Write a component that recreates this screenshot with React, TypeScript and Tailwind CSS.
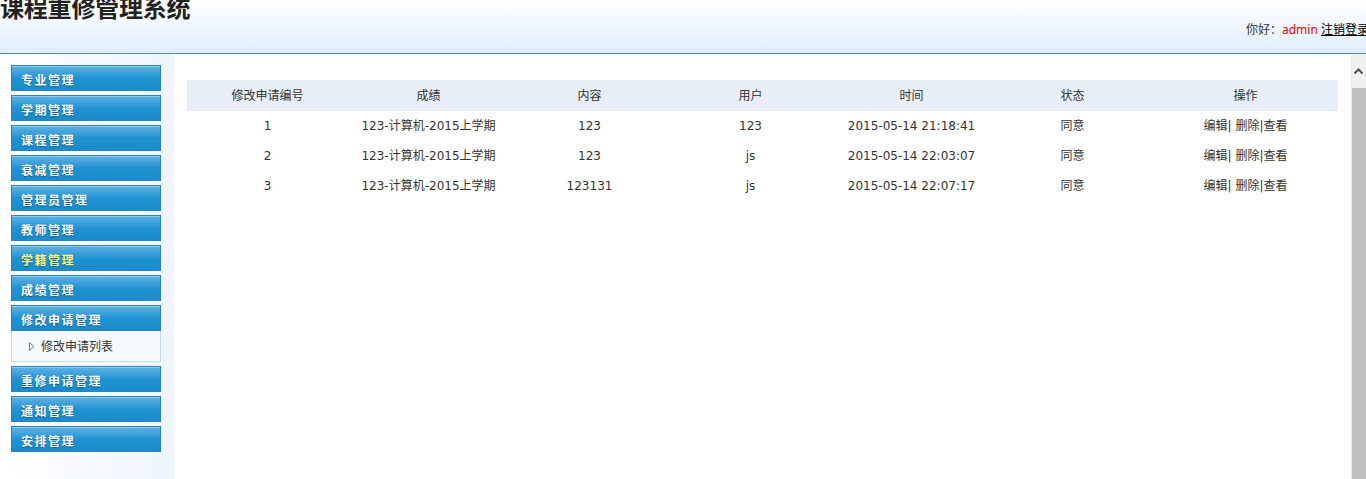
const menus = [
  "专业管理",
  "学期管理",
  "课程管理",
  "衰减管理",
  "管理员管理",
  "教师管理",
  "学籍管理",
  "成绩管理",
  "修改申请管理",
  "重修申请管理",
  "通知管理",
  "安排管理",
];

const rows = [
  { id: "1", score: "123-计算机-2015上学期", content: "123", user: "123", time: "2015-05-14 21:18:41", status: "同意" },
  { id: "2", score: "123-计算机-2015上学期", content: "123", user: "js", time: "2015-05-14 22:03:07", status: "同意" },
  { id: "3", score: "123-计算机-2015上学期", content: "123131", user: "js", time: "2015-05-14 22:07:17", status: "同意" },
];

const cols = ["修改申请编号", "成绩", "内容", "用户", "时间", "状态", "操作"];
const colW = ["w-[161px]", "w-[161px]", "w-[161px]", "w-[161px]", "w-[161px]", "w-[161px]", "w-[185px]"];

function MenuButton({ label }: { label: string }) {
  return (
    <div className="h-[26px] w-[150px] border border-[#2a83c0] bg-gradient-to-b from-[#5db3e3] via-[#1f93d2] to-[#1a8bcb] shadow-[inset_0_1px_0_#8fcdf0] flex items-center pl-[9px]">
      <span
        className={
          "text-[12px] font-bold leading-none pt-[6px] tracking-[1.5px] [text-shadow:0_1px_1px_rgba(0,60,110,0.6)] " +
          (label === "学籍管理" ? "text-[#ffff7a]" : "text-white")
        }
      >
        {label}
      </span>
    </div>
  );
}

export default function App() {
  return (
    <div
      className="w-[1366px] h-[479px] overflow-hidden flex flex-col bg-white text-[#333]"
      style={{ fontFamily: '"Noto Sans", "Noto Sans CJK SC", sans-serif' }}
    >
      {/* header */}
      <div className="h-[54px] shrink-0 border-b border-[#4a8ccc] bg-gradient-to-b from-white to-[#dfeefc] flex justify-between">
        <h1 className="text-[24px] font-bold leading-none mt-[-4px] text-[#222] tracking-[-0.2px]">
          课程重修管理系统
        </h1>
        <div className="self-start mt-[24px] mr-[-3px] text-[12px] leading-none whitespace-nowrap">
          <span className="text-[#333]">你好：</span>
          <span className="text-[#ff0000]">admin</span>{" "}
          <a href="#" className="text-black underline">
            注销登录
          </a>
        </div>
      </div>

      <div className="flex flex-1 min-h-0">
        {/* sidebar */}
        <aside className="w-[174px] shrink-0 bg-gradient-to-r from-white to-[#eef5fd] pt-[11px] pl-[11px] flex flex-col gap-[4px]">
          {menus.map((m) => (
            <div key={m}>
              <MenuButton label={m} />
              {m === "修改申请管理" && (
                <div className="w-[150px] h-[31px] border border-t-0 border-[#c6dbe9] bg-[#f5fafe] flex items-center pl-[17px] gap-[6px]">
                  <svg width="6" height="9" viewBox="0 0 6 9">
                    <path d="M0.5 0.5 L5 4.5 L0.5 8.5 Z" fill="#eef6fc" stroke="#3a8fc8" strokeWidth="1" />
                  </svg>
                  <span className="text-[12px] text-[#333] pt-[2px]">修改申请列表</span>
                </div>
              )}
            </div>
          ))}
        </aside>

        {/* content */}
        <main className="flex-1 pt-[26px] px-[13px]">
          <table
            className="w-[1151px] border-collapse text-[12px] text-[#333]"
            style={{ fontFamily: '"DejaVu Sans", "Noto Sans CJK SC", sans-serif' }}
          >
            <thead>
              <tr className="h-[31px] bg-[#e8eef7]">
                {cols.map((c, i) => (
                  <th key={c} className={"font-normal text-center " + colW[i]}>
                    {c}
                  </th>
                ))}
              </tr>
            </thead>
            <tbody>
              {rows.map((r) => (
                <tr key={r.id} className="h-[30px]">
                  <td className="text-center">{r.id}</td>
                  <td className="text-center">{r.score}</td>
                  <td className="text-center">{r.content}</td>
                  <td className="text-center">{r.user}</td>
                  <td className="text-center">{r.time}</td>
                  <td className="text-center">{r.status}</td>
                  <td className="text-center">
                    <a href="#" className="text-[#333]">编辑</a>|{" "}
                    <a href="#" className="text-[#333]">删除</a>|
                    <a href="#" className="text-[#333]">查看</a>
                  </td>
                </tr>
              ))}
            </tbody>
          </table>
        </main>

        {/* scrollbar */}
        <div className="w-[15px] shrink-0 bg-[#f0f0f0] flex flex-col">
          <div className="h-[34px] flex items-center justify-center">
            <svg width="9" height="6" viewBox="0 0 9 6">
              <path d="M0.5 5.5 L4.5 1.5 L8.5 5.5" fill="none" stroke="#505050" strokeWidth="2" />
            </svg>
          </div>
          <div className="flex-1 ml-[1px] bg-[#c1c1c1]" />
        </div>
      </div>
    </div>
  );
}
